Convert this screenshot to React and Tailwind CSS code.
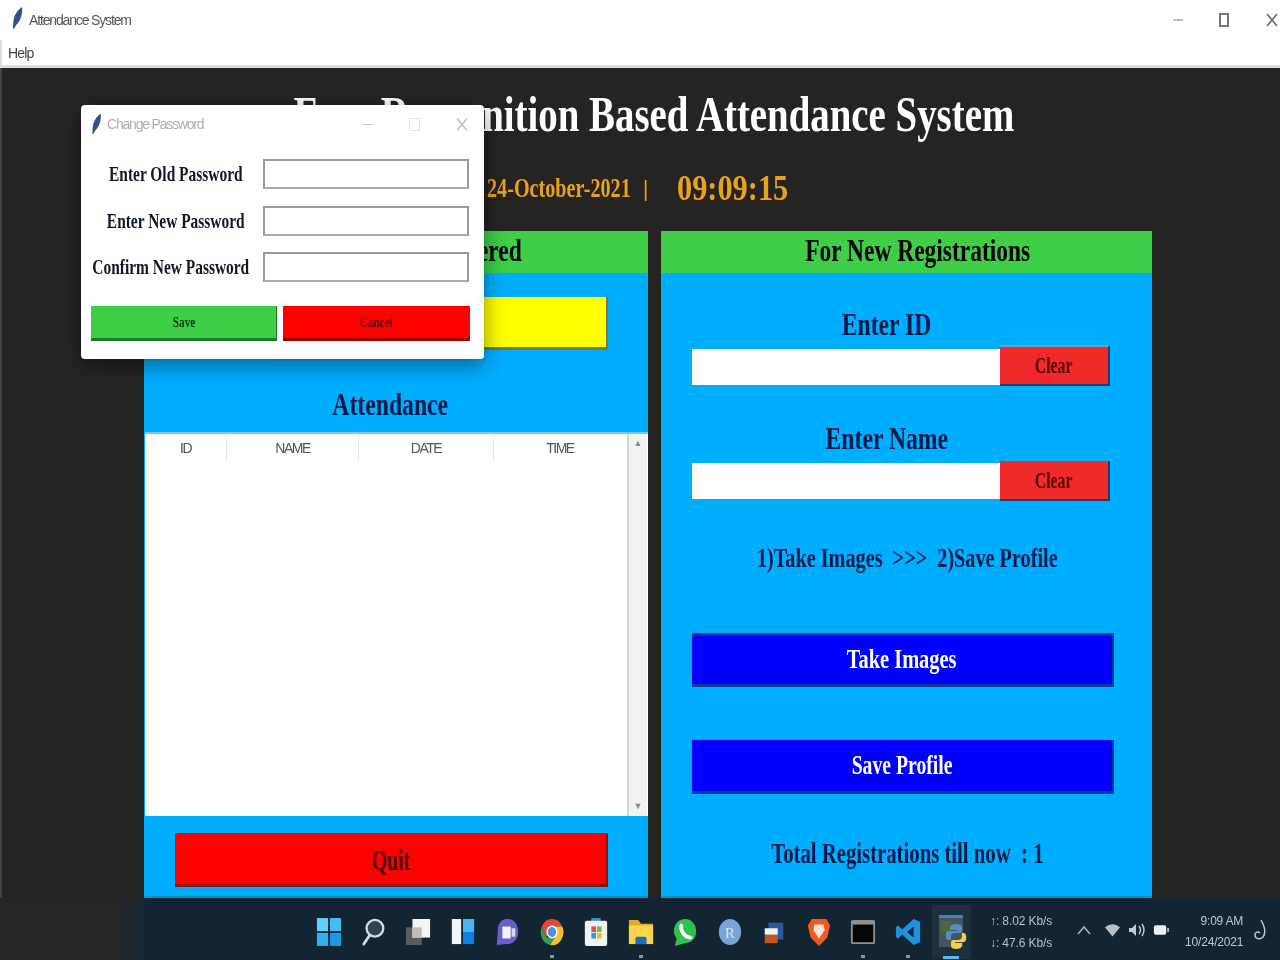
import React from 'react';

const Stretch = ({ className = '', children }) => (
  <span className={`inline-block whitespace-pre ${className}`}>{children}</span>
);

const Feather = ({ className = '' }) => (
  <svg viewBox="0 0 12 26" className={className}>
    <path d="M11 1 C12 8 9 17 5 20 L2 25 L1 24 L1.5 18 C1.5 11 6 4 11 1 Z" fill="#34527f" />
  </svg>
);

const RaisedButton = ({ className = '', children }) => (
  <div className={`flex items-center justify-center ${className}`}>{children}</div>
);

const Win = () => (
  <svg viewBox="0 0 28 32" className="w-[26px] h-[32px]">
    <rect x="1" y="1" width="12" height="14" fill="#5fd0f7" />
    <rect x="15" y="1" width="12" height="14" fill="#42bdf2" />
    <rect x="1" y="17" width="12" height="14" fill="#2fb0ef" />
    <rect x="15" y="17" width="12" height="14" fill="#1a97e6" />
  </svg>
);

const Search = () => (
  <svg viewBox="0 0 28 32" className="w-[26px] h-[32px]">
    <circle cx="15" cy="12" r="9" fill="#2f4350" stroke="#d5dbdf" strokeWidth="2.5" />
    <path d="M9 20 L3 29" stroke="#d5dbdf" strokeWidth="3" strokeLinecap="round" />
  </svg>
);

const TaskView = () => (
  <svg viewBox="0 0 28 32" className="w-[26px] h-[32px]">
    <rect x="1" y="11" width="17" height="19" fill="#5c5c5c" />
    <rect x="8" y="2" width="19" height="20" fill="#f4f4f4" />
    <rect x="8" y="11" width="10" height="11" fill="#bdbdbd" />
  </svg>
);

const Widgets = () => (
  <svg viewBox="0 0 28 32" className="w-[26px] h-[32px]">
    <rect x="2" y="2" width="10" height="27" fill="#f1f6fb" />
    <rect x="14" y="2" width="12" height="14" fill="#45b6f2" />
    <rect x="14" y="16" width="12" height="13" fill="#0f7fdc" />
  </svg>
);

const Teams = () => (
  <svg viewBox="0 0 28 32" className="w-[26px] h-[32px]">
    <path d="M14 2 C23 2 26 9 26 16 C26 24 21 29 14 29 L3 30 L4 16 C4 8 7 2 14 2 Z" fill="#6a5fc9" />
    <rect x="9" y="10" width="9" height="13" rx="1" fill="#f2f0fb" />
    <rect x="19" y="12" width="4" height="9" fill="#dcd8f5" />
  </svg>
);

const Chrome = () => (
  <svg viewBox="0 0 28 32" className="w-[26px] h-[32px]">
    <path d="M14 2 A12 14 0 0 1 25 10 L14 10 Z M14 2 A12 14 0 0 0 3 10 L8 22 L14 10 Z" fill="#e04a3a" />
    <path d="M3 10 A12 14 0 0 0 12 30 L17 22 L8 22 Z" fill="#2f9e50" />
    <path d="M25 10 L14 10 L17 22 L12 30 A12 14 0 0 0 25 10 Z" fill="#f5c02e" />
    <ellipse cx="14" cy="16" rx="6" ry="7" fill="#fff" />
    <ellipse cx="14" cy="16" rx="4.5" ry="5.5" fill="#4a8fe8" />
  </svg>
);

const Store = () => (
  <svg viewBox="0 0 28 32" className="w-[26px] h-[32px]">
    <rect x="9" y="1" width="10" height="6" fill="#3c8fc0" />
    <rect x="2" y="4" width="24" height="27" rx="2" fill="#f0f3f5" />
    <rect x="9" y="10" width="5" height="6" fill="#e8503a" />
    <rect x="15" y="10" width="5" height="6" fill="#7fbb3a" />
    <rect x="9" y="17" width="5" height="6" fill="#2f9be8" />
    <rect x="15" y="17" width="5" height="6" fill="#f5b82e" />
  </svg>
);

const Folder = () => (
  <svg viewBox="0 0 28 32" className="w-[26px] h-[32px]">
    <path d="M1 3 H11 L14 7 H27 V29 H1 Z" fill="#e5a823" />
    <rect x="1" y="9" width="26" height="20" fill="#fbd34d" />
    <path d="M8 29 V23 Q8 21 10 21 H18 Q20 21 20 23 V29 Z" fill="#1a6fc0" />
  </svg>
);

const Whatsapp = () => (
  <svg viewBox="0 0 28 32" className="w-[26px] h-[32px]">
    <path d="M14 2 C22 2 26 9 26 15 C26 23 21 28 14 28 L3 31 L5 23 C3 20 2 18 2 15 C2 8 7 2 14 2 Z" fill="#30c04f" />
    <path d="M10 9 C9 15 13 21 20 22" fill="none" stroke="#fff" strokeWidth="4" strokeLinecap="round" />
  </svg>
);

const RStudio = () => (
  <svg viewBox="0 0 28 32" className="w-[26px] h-[32px]">
    <ellipse cx="14" cy="16" rx="12" ry="14" fill="#7ba4d6" />
    <text x="14" y="22" textAnchor="middle" fontFamily="Liberation Serif" fontSize="16" fill="#d9e5f3">R</text>
  </svg>
);

const Box = () => (
  <svg viewBox="0 0 28 32" className="w-[26px] h-[32px]">
    <rect x="8" y="6" width="16" height="18" fill="#2a5a9a" />
    <rect x="4" y="12" width="14" height="7" fill="#f2f2f2" />
    <rect x="4" y="19" width="14" height="9" fill="#bf5a1c" />
  </svg>
);

const Brave = () => (
  <svg viewBox="0 0 28 32" className="w-[26px] h-[32px]">
    <path d="M6 2 H22 L26 9 L23 22 L14 31 L5 22 L2 9 Z" fill="#ef5a22" />
    <path d="M9 8 H19 L20 14 L14 23 L8 14 Z" fill="#fbe3da" />
  </svg>
);

const Terminal = () => (
  <svg viewBox="0 0 28 32" className="w-[26px] h-[32px]">
    <rect x="1" y="3" width="26" height="26" rx="2" fill="#8b8f92" />
    <rect x="3" y="8" width="22" height="19" fill="#050505" />
  </svg>
);

const VsCode = () => (
  <svg viewBox="0 0 28 32" className="w-[26px] h-[32px]">
    <path d="M20 2 L27 5 V27 L20 30 L8 19 L3 23 L1 21 V11 L3 9 L8 13 Z M20 10 L13 16 L20 22 Z" fill="#1f8fe0" />
  </svg>
);

const Python = () => (
  <svg viewBox="0 0 30 40" className="w-[30px] h-[40px]">
    <rect x="2" y="3" width="24" height="32" fill="#48535e" />
    <rect x="2" y="3" width="24" height="3" fill="#3a86c0" />
    <rect x="4" y="9" width="10" height="12" fill="#4a6a3a" />
    <path d="M19 12 C13 12 13 15 13 18 H20 V19 H11 C8 19 8 28 11 28 H14 V24 C14 22 16 21 18 21 H23 C25 21 25 19 25 17 V15 C25 13 23 12 19 12 Z" fill="#4f8fc8" />
    <path d="M19 37 C25 37 25 34 25 31 H18 V30 H27 C30 30 30 21 27 21 H25 V25 C25 27 23 28 21 28 H16 C14 28 14 30 14 32 V34 C14 36 16 37 19 37 Z" fill="#f2d048" />
  </svg>
);

const taskIcons = [
  { icon: Win },
  { icon: Search },
  { icon: TaskView },
  { icon: Widgets },
  { icon: Teams },
  { icon: Chrome, dot: true },
  { icon: Store },
  { icon: Folder, dot: true },
  { icon: Whatsapp },
  { icon: RStudio },
  { icon: Box },
  { icon: Brave },
  { icon: Terminal, dot: true },
  { icon: VsCode, dot: true },
];

const passwordRows = [
  { label: 'Enter Old Password', offset: 'pr-[3px]' },
  { label: 'Enter New Password', offset: 'pr-[3px]' },
  { label: 'Confirm New Password', offset: 'pr-[12px]' },
];

const App = () => {
  return (
    <div className="w-[1280px] h-[960px] relative overflow-hidden flex flex-col bg-white font-['Liberation_Serif',serif] blur-[0.7px]">
      {/* window title bar */}
      <div className="h-[40px] flex items-center pl-[12px] pr-[2px]">
        <Feather className="w-[11px] h-[24px] mb-[4px]" />
        <span className="ml-[6px] text-[14px] tracking-[-1.15px] text-[#555] font-['Liberation_Sans',sans-serif]">Attendance System</span>
        <div className="ml-auto flex items-center text-[#777]">
          <div className="w-[10px] h-[2px] bg-[#bbb] mr-[36px]" />
          <div className="w-[10px] h-[14px] border-2 border-[#777] mr-[37px]" />
          <svg viewBox="0 0 12 14" className="w-[12px] h-[16px]">
            <path d="M1 1 L11 13 M11 1 L1 13" stroke="#666" strokeWidth="1.6" />
          </svg>
        </div>
      </div>
      <div className="h-[25px] flex items-center pl-[6px] pt-[2px] border-l-2 border-[#ddd] text-[14px] tracking-[-0.8px] text-[#444] font-['Liberation_Sans',sans-serif]">
        Help
      </div>
      <div className="h-[3px] bg-[#ddd]" />

      {/* main */}
      <div className="flex-1 min-h-0 bg-[#262422] border-l-2 border-[#3f4648] flex flex-col">
        <div className="h-[92px] flex items-center justify-center pl-[26px] pb-[1px] text-white font-bold text-[50px] leading-none">
          <Stretch className="scale-x-[0.777]">Face Recognition Based Attendance System</Stretch>
        </div>
        <div className="h-[71px] flex items-center pl-[485px] pb-[15px] text-[#e8a21c] font-bold">
          <Stretch className="text-[27px] origin-left scale-x-[0.747] w-[160px]">24-October-2021</Stretch>
          <span className="text-[24px] ml-[-4px] w-[33px]">|</span>
          <Stretch className="text-[35px] origin-left scale-x-[0.867] w-[111px] ml-[1px] mt-[2px]">09:09:15</Stretch>
        </div>
        <div className="flex-1 min-h-0 flex pl-[142px] gap-[13px]">
          {/* left panel */}
          <div className="w-[504px] bg-[#00aeff] border-b-2 border-[#0a8fd0] flex flex-col">
            <div className="h-[42px] bg-[#3ece48] flex items-center justify-center pl-[19px] pb-[2px] font-bold text-[31px] text-black">
              <Stretch className="scale-x-[0.757]">For Already Registered</Stretch>
            </div>
            <RaisedButton className="ml-[31px] mt-[24px] w-[433px] h-[53px] bg-[#ffff00] border-b-[3px] border-r-2 border-[#7c7a10]" />
            <div className="mt-[39px] h-[32px] flex items-center justify-center pr-[12px] pb-[2px] font-bold text-[32px] text-[#021a4a]">
              <Stretch className="scale-x-[0.74]">Attendance</Stretch>
            </div>
            <div className="mt-[11px] ml-[1px] h-[384px] bg-white flex border-t-2 border-[#74c9f0]">
              <div className="flex-1 flex flex-col border-r-2 border-[#d4d4d4]">
                <div className="h-[28px] grid grid-cols-[82px_132px_135px_132px] text-[14px] tracking-[-1.5px] text-[#555] font-['Liberation_Sans',sans-serif]">
                  {['ID', 'NAME', 'DATE', 'TIME'].map((col, i) => (
                    <div key={col} className={`flex items-center justify-center ${i < 3 ? 'border-r border-[#e8e8e8]' : ''}`}>
                      {col}
                    </div>
                  ))}
                </div>
              </div>
              <div className="w-[18px] mr-[1px] bg-[#f2f2f2] flex flex-col items-center justify-between py-[5px] text-[#8a8a8a] text-[9px] leading-none">
                <span>▲</span>
                <span>▼</span>
              </div>
            </div>
            <RaisedButton className="ml-[31px] mt-[17px] w-[433px] h-[54px] bg-[#ff0000] border-b-[3px] border-r-2 border-[#8c1010] pl-[2px] pt-[2px] font-bold text-[30px] text-[#4a0000]">
              <Stretch className="scale-x-[0.66]">Quit</Stretch>
            </RaisedButton>
          </div>

          {/* right panel */}
          <div className="w-[491px] bg-[#00aeff] border-b-2 border-[#0a8fd0] flex flex-col">
            <div className="h-[42px] bg-[#3ece48] flex items-center justify-center pl-[22px] pb-[2px] font-bold text-[31px] text-black">
              <Stretch className="scale-x-[0.757]">For New Registrations</Stretch>
            </div>
            <div className="w-[390px] ml-[31px] mt-[36px] h-[32px] flex items-center justify-center pb-[2px] font-bold text-[32px] text-[#021a4a]">
              <Stretch className="scale-x-[0.74]">Enter ID</Stretch>
            </div>
            <div className="ml-[31px] mt-[4px] h-[41px] flex items-start">
              <div className="mt-[4px] w-[308px] h-[36px] bg-white" />
              <RaisedButton className="w-[110px] h-[41px] bg-[#ee2a2a] border-t-2 border-b-2 border-r-2 border-t-[#6aa0c8] border-b-[#1f3f6a] border-r-[#1f3f6a] pb-[2px] font-bold text-[24px] text-[#5a0000]">
                <Stretch className="scale-x-[0.66]">Clear</Stretch>
              </RaisedButton>
            </div>
            <div className="w-[390px] ml-[31px] mt-[37px] h-[32px] flex items-center justify-center pb-[2px] font-bold text-[32px] text-[#021a4a]">
              <Stretch className="scale-x-[0.74]">Enter Name</Stretch>
            </div>
            <div className="ml-[31px] mt-[6px] h-[40px] flex items-start">
              <div className="mt-[2px] w-[308px] h-[36px] bg-white" />
              <RaisedButton className="w-[110px] h-[40px] bg-[#ee2a2a] border-b-2 border-r-2 border-[#1f3f6a] font-bold text-[24px] text-[#5a0000]">
                <Stretch className="scale-x-[0.66]">Clear</Stretch>
              </RaisedButton>
            </div>
            <div className="ml-[31px] w-[430px] mt-[41px] h-[32px] flex items-center justify-center font-bold text-[28px] text-[#021a4a]">
              <Stretch className="scale-x-[0.722]">1)Take Images  &gt;&gt;&gt;  2)Save Profile</Stretch>
            </div>
            <RaisedButton className="ml-[31px] mt-[59px] w-[422px] h-[54px] bg-[#0000ff] border-t-2 border-b-[3px] border-r-2 border-[#0a3a9a] font-bold text-[27px] text-white">
              <Stretch className="scale-x-[0.755]">Take Images</Stretch>
            </RaisedButton>
            <RaisedButton className="ml-[31px] mt-[53px] w-[422px] h-[54px] bg-[#0000ff] border-b-[3px] border-r-2 border-[#0a3a9a] font-bold text-[27px] text-white">
              <Stretch className="scale-x-[0.73]">Save Profile</Stretch>
            </RaisedButton>
            <div className="ml-[31px] w-[430px] mt-[44px] h-[32px] flex items-center justify-center font-bold text-[29px] text-[#021a4a]">
              <Stretch className="scale-x-[0.715]">Total Registrations till now  : 1</Stretch>
            </div>
          </div>
        </div>
      </div>

      {/* taskbar */}
      <div className="h-[62px] bg-[linear-gradient(90deg,#262626_0%,#262626_9%,#132533_11.5%,#132533_100%)] flex items-center pl-[307px] font-['Liberation_Sans',sans-serif]">
        {taskIcons.map(({ icon: Icon, dot }, i) => (
          <div key={i} className="relative w-[44.5px] h-[62px] flex items-center justify-center pt-[6px]">
            <Icon />
            {dot && <div className="absolute bottom-[2px] left-[20px] w-[4px] h-[3px] bg-[#8a949c]" />}
          </div>
        ))}
        <div className="relative ml-[2px] w-[39px] h-[54px] bg-[#1f303d] flex items-center justify-center mt-[6px]">
          <Python />
          <div className="absolute bottom-[0px] left-[11px] w-[16px] h-[3px] bg-[#58b8f0]" />
        </div>
        <div className="ml-[19px] flex flex-col gap-[8px] pt-[6px] text-[12px] leading-[14px] tracking-[-0.1px] text-[#b8c2c9] whitespace-nowrap">
          <span>↑: 8.02 Kb/s</span>
          <span>↓: 47.6 Kb/s</span>
        </div>
        <div className="ml-[25px] flex items-center gap-[7px] pt-[2px]">
          <svg viewBox="0 0 14 10" className="w-[14px] h-[10px]">
            <path d="M1 9 L7 2 L13 9" fill="none" stroke="#aab4bb" strokeWidth="1.5" />
          </svg>
          <svg viewBox="0 0 18 14" className="w-[17px] h-[14px] ml-[6px]">
            <path d="M1 4 Q9 -2 17 4 L9 14 Z" fill="#b8c0c6" />
          </svg>
          <svg viewBox="0 0 18 14" className="w-[18px] h-[14px]">
            <path d="M1 5 H4 L8 1 V13 L4 9 H1 Z" fill="#c4ccd1" />
            <path d="M11 3 Q14 7 11 11 M14 1 Q18 7 14 13" fill="none" stroke="#c4ccd1" strokeWidth="1.4" />
          </svg>
          <svg viewBox="0 0 18 14" className="w-[17px] h-[14px]">
            <rect x="1" y="2" width="13" height="10" rx="2" fill="#eef1f3" />
            <rect x="15" y="5" width="2" height="4" fill="#b0b8bd" />
          </svg>
        </div>
        <div className="ml-[13px] w-[60px] flex flex-col items-end gap-[7px] pt-[5px] text-[12px] leading-[14px] tracking-[-0.2px] text-[#c0c8ce] whitespace-nowrap">
          <span>9:09 AM</span>
          <span>10/24/2021</span>
        </div>
        <svg viewBox="0 0 14 22" className="ml-[10px] mt-[1px] w-[14px] h-[22px]">
          <path d="M8 1 C12 8 13 14 10 18 C7 21 2 20 2 16 C2 13 5 12 7 14" fill="none" stroke="#c0c8ce" strokeWidth="1.5" />
        </svg>
      </div>

      {/* change password dialog, floats over the main window */}
      <div className="absolute left-[81px] top-[105px] w-[403px] h-[254px] bg-white rounded-[4px] shadow-[0_6px_22px_rgba(0,0,0,0.45)] flex flex-col px-[10px]">
        <div className="h-[38px] flex items-center">
          <Feather className="w-[11px] h-[22px]" />
          <span className="ml-[5px] text-[14px] tracking-[-1.2px] text-[#b0b0b0] font-['Liberation_Sans',sans-serif]">Change Password</span>
          <div className="ml-auto flex items-center">
            <div className="w-[11px] h-[1px] bg-[#ccc] mr-[36px]" />
            <div className="w-[11px] h-[13px] border border-[#e4e4e4] mr-[36px]" />
            <svg viewBox="0 0 12 14" className="w-[12px] h-[15px] mr-[6px]">
              <path d="M1 1 L11 13 M11 1 L1 13" stroke="#bbb" strokeWidth="1.2" />
            </svg>
          </div>
        </div>
        <div className="flex flex-col gap-[16.5px] mt-[16px]">
          {passwordRows.map(({ label, offset }) => (
            <div key={label} className="h-[30px] flex items-center">
              <div className={`w-[172px] pt-[2px] flex justify-center font-bold text-[21px] text-[#101828] ${offset}`}>
                <Stretch className="scale-x-[0.735] shrink-0">{label}</Stretch>
              </div>
              <div className="w-[206px] h-[30px] bg-white border-2 border-[#9a9a9a] border-b-[#aaa]" />
            </div>
          ))}
        </div>
        <div className="flex gap-[6px] mt-[24px]">
          <RaisedButton className="w-[186px] h-[35px] bg-[#3ece48] border-b-[3px] border-r border-[#1a7a26] font-bold text-[15px] text-[#0a3a10]">
            <Stretch className="scale-x-[0.75]">Save</Stretch>
          </RaisedButton>
          <RaisedButton className="w-[187px] h-[35px] bg-[#ff0000] border-b-[3px] border-[#a00000] font-bold text-[15px] text-[#5a0000]">
            <Stretch className="scale-x-[0.75]">Cancel</Stretch>
          </RaisedButton>
        </div>
      </div>
    </div>
  );
};

export default App;
